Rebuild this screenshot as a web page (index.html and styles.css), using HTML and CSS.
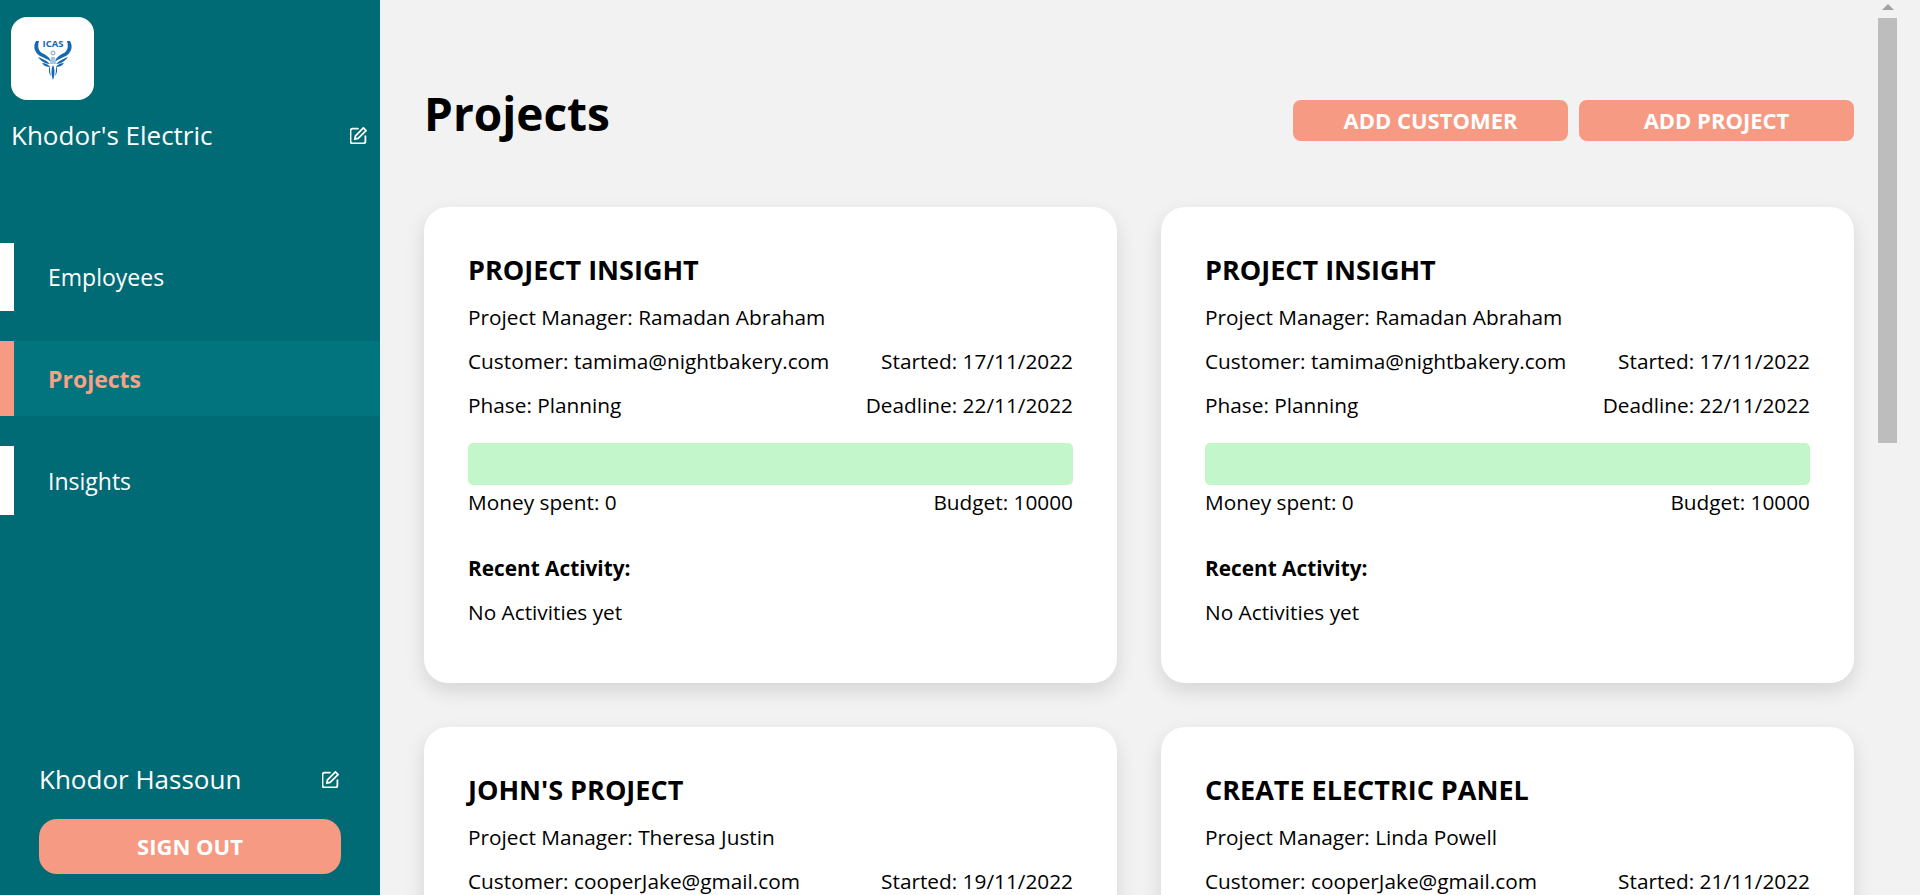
FILE: index.html
```html
<!DOCTYPE html>
<html lang="en">
<head>
    <meta charset="UTF-8">
    <meta name="viewport" content="width=device-width, initial-scale=1.0">
    <title>Projects</title>
    <link rel="stylesheet" href="styles.css">
</head>
<body>
    <aside class="sidebar">
        <div class="company">
            <div class="logo">
                <svg class="logoMark" viewBox="0 0 40 42">
                    <text x="20" y="8.5" text-anchor="middle" class="logoText">ICAS</text>
                    <path d="M3 3C0 8 1 14 7 18c4 2 8 3 11 6-1-5-5-7-9-9C6 13 4 9 6 3zM37 3c3 5 2 11-4 15-4 2-8 3-11 6 1-5 5-7 9-9 3-2 5-6 3-12z" fill="#1668b0"/>
                    <path d="M5 19c3 1 8 3 12 7-5 0-9-3-12-7zM35 19c-3 1-8 3-12 7 5 0 9-3 12-7zM9 25c3 0 6 1 8 4-3 0-6-1-8-4zM31 25c-3 0-6 1-8 4 3 0 6-1 8-4z" fill="#1668b0"/>
                    <circle cx="20" cy="15" r="2" fill="none" stroke="#6f9fca" stroke-width="1"/>
                    <path d="M18 19h4l1 7h-6z" fill="#a9c6e0"/>
                    <path d="M20 27c2 4 2 10 0 15-2-5-2-11 0-15zM17 28c0 4 0 7 1 10-2-2-3-7-1-10zM23 28c0 4 0 7-1 10 2-2 3-7 1-10z" fill="#1668b0"/>
                </svg>
            </div>
            <div class="companyRow">
                <span class="companyName">Khodor's Electric</span>
                <svg class="editIcon" viewBox="1 1 16 16"><path d="M8.5 2.5H3.5a2 2 0 0 0-2 2v10a2 2 0 0 0 2 2h10a2 2 0 0 0 2-2v-5M13.6 1.9l2.5 2.5-7.4 7.4-3.2.7.7-3.2z"/></svg>
            </div>
        </div>
        <nav class="nav">
            <a class="navItem">Employees</a>
            <a class="navItem active">Projects</a>
            <a class="navItem">Insights</a>
        </nav>
        <div class="user">
            <div class="userRow">
                <span class="userName">Khodor Hassoun</span>
                <svg class="editIcon" viewBox="1 1 16 16"><path d="M8.5 2.5H3.5a2 2 0 0 0-2 2v10a2 2 0 0 0 2 2h10a2 2 0 0 0 2-2v-5M13.6 1.9l2.5 2.5-7.4 7.4-3.2.7.7-3.2z"/></svg>
            </div>
            <button class="signOut">SIGN OUT</button>
        </div>
    </aside>

    <main class="main">
        <header class="pageHeader">
            <h1>Projects</h1>
            <div class="actions">
                <button class="addBtn">ADD CUSTOMER</button>
                <button class="addBtn">ADD PROJECT</button>
            </div>
        </header>

        <section class="cards">
            <article class="card">
                <h2>PROJECT INSIGHT</h2>
                <div class="row"><span>Project Manager: Ramadan Abraham</span></div>
                <div class="row"><span>Customer: tamima@nightbakery.com</span><span>Started: 17/11/2022</span></div>
                <div class="row"><span>Phase: Planning</span><span>Deadline: 22/11/2022</span></div>
                <div class="budgetBar"></div>
                <div class="row money"><span>Money spent: 0</span><span>Budget: 10000</span></div>
                <h3>Recent Activity:</h3>
                <div class="row"><span>No Activities yet</span></div>
            </article>
            <article class="card">
                <h2>PROJECT INSIGHT</h2>
                <div class="row"><span>Project Manager: Ramadan Abraham</span></div>
                <div class="row"><span>Customer: tamima@nightbakery.com</span><span>Started: 17/11/2022</span></div>
                <div class="row"><span>Phase: Planning</span><span>Deadline: 22/11/2022</span></div>
                <div class="budgetBar"></div>
                <div class="row money"><span>Money spent: 0</span><span>Budget: 10000</span></div>
                <h3>Recent Activity:</h3>
                <div class="row"><span>No Activities yet</span></div>
            </article>
            <article class="card">
                <h2>JOHN'S PROJECT</h2>
                <div class="row"><span>Project Manager: Theresa Justin</span></div>
                <div class="row"><span>Customer: cooperJake@gmail.com</span><span>Started: 19/11/2022</span></div>
            </article>
            <article class="card">
                <h2>CREATE ELECTRIC PANEL</h2>
                <div class="row"><span>Project Manager: Linda Powell</span></div>
                <div class="row"><span>Customer: cooperJake@gmail.com</span><span>Started: 21/11/2022</span></div>
            </article>
        </section>
    </main>

    <!-- barra de scroll -->
    <div class="scrollbar">
        <div class="scrollArrow"></div>
        <div class="scrollThumb"></div>
    </div>
</body>
</html>
```

FILE: styles.css
```css
html, body {
    height: 100%;
}
body {
    margin: 0;
    display: flex;
    height: 895px;
    overflow: hidden;
    background-color: #f2f2f2;
    font-family: "Open Sans", Arial, sans-serif;
    color: #000;
}
button {
    font-family: inherit;
    border: none;
    color: white;
    background-color: #f69a83;
    cursor: pointer;
}

/* sidebar */
.sidebar {
    width: 380px;
    flex-shrink: 0;
    display: flex;
    flex-direction: column;
    background-color: #016b75;
    color: white;
}
.company {
    padding: 17px 13px 0 11px;
}
.logo {
    width: 83px;
    height: 83px;
    border-radius: 16px;
    background-color: white;
    display: flex;
    align-items: center;
    justify-content: center;
}
.logoMark {
    width: 40px;
    height: 42px;
    overflow: visible;
}
.logoText {
    font-family: "Open Sans", Arial, sans-serif;
    font-size: 9.5px;
    font-weight: 700;
    fill: #1668b0;
}
.companyRow {
    display: flex;
    align-items: center;
    justify-content: space-between;
    margin-top: 16px;
    height: 38px;
}
.companyName {
    font-size: 26px;
}
.editIcon {
    width: 17px;
    height: 17px;
    fill: none;
    stroke: white;
    stroke-width: 1.7;
    stroke-linejoin: round;
    stroke-linecap: round;
}
.nav {
    margin-top: 89px;
    display: flex;
    flex-direction: column;
    gap: 30px;
}
.navItem {
    display: flex;
    align-items: center;
    height: 68px;
    padding-left: 34px;
    border-left: 14px solid white;
    font-size: 23px;
}
.navItem:last-child {
    height: 69px;
}
.navItem.active {
    height: 75px;
    background-color: #02747e;
    border-left-color: #f69a83;
    color: #f9a088;
    font-weight: 700;
}
.user {
    margin-top: auto;
    padding: 0 39px 21px;
}
.userRow {
    display: flex;
    align-items: center;
    justify-content: space-between;
    padding-right: 2px;
    margin-bottom: 22px;
}
.userName {
    font-size: 26px;
}
.signOut {
    display: block;
    width: 100%;
    height: 55px;
    padding-bottom: 3px;
    border-radius: 18px;
    font-size: 22px;
    font-weight: 700;
}

/* contenido */
.main {
    flex: 1;
    padding: 79px 66px 0 44px;
}
.pageHeader {
    display: flex;
    justify-content: space-between;
    align-items: flex-start;
    margin-bottom: 60px;
}
h1 {
    margin: 0;
    font-size: 46px;
    line-height: 68px;
    font-weight: 700;
}
.actions {
    display: flex;
    gap: 11px;
    margin-top: 21px;
}
.addBtn {
    width: 275px;
    height: 41px;
    padding-bottom: 3px;
    border-radius: 8px;
    font-size: 22px;
    font-weight: 700;
}
.cards {
    display: grid;
    grid-template-columns: 693px 693px;
    gap: 44px;
}
.card {
    background-color: white;
    border-radius: 24px;
    padding: 40px 44px 49px;
    box-shadow: 0 8px 20px rgba(0, 0, 0, 0.12);
}
h2 {
    margin: 0 0 2px;
    font-size: 27px;
    line-height: 46px;
    font-weight: 700;
}
.row {
    display: flex;
    justify-content: space-between;
    font-size: 20.8px;
    line-height: 44px;
}
.budgetBar {
    height: 42px;
    margin-top: 16px;
    border-radius: 5px;
    background-color: #c3f7cb;
}
.money {
    line-height: 34px;
}
h3 {
    margin: 27px 0 0;
    font-size: 20.8px;
    line-height: 44px;
    font-weight: 700;
}

/* va encima del contenido */
.scrollbar {
    position: absolute;
    top: 0;
    left: 1878px;
    width: 19px;
}
.scrollArrow {
    height: 18px;
    display: flex;
    justify-content: center;
}
.scrollArrow::before {
    content: "";
    margin-top: 4px;
    height: 0;
    border-left: 6px solid transparent;
    border-right: 6px solid transparent;
    border-bottom: 6px solid #a3a3a3;
}
.scrollThumb {
    height: 425px;
    background-color: #bdbdbd;
}
```
